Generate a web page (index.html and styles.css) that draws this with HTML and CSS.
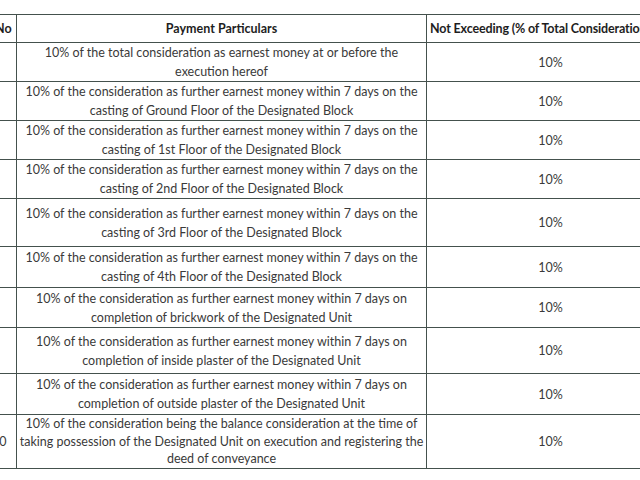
FILE: index.html
```html
<!DOCTYPE html>
<html>
<head>
<meta charset="utf-8">
<link rel="stylesheet" href="styles.css">
</head>
<body>
<table class="sched">
  <colgroup>
    <col class="c-no">
    <col class="c-part">
    <col class="c-pct">
  </colgroup>
  <tr class="head">
    <th class="no">S.No</th>
    <th class="part">Payment Particulars</th>
    <th class="pct">Not Exceeding (% of Total Consideration)</th>
  </tr>
  <tr class="r39">
    <td class="no">1</td>
    <td class="part">10% of the total consideration as earnest money at or before the<br>execution hereof</td>
    <td class="pct">10%</td>
  </tr>
  <tr class="r39">
    <td class="no">2</td>
    <td class="part">10% of the consideration as further earnest money within 7 days on the<br>casting of Ground Floor of the Designated Block</td>
    <td class="pct">10%</td>
  </tr>
  <tr class="r39">
    <td class="no">3</td>
    <td class="part">10% of the consideration as further earnest money within 7 days on the<br>casting of 1st Floor of the Designated Block</td>
    <td class="pct">10%</td>
  </tr>
  <tr class="r39">
    <td class="no">4</td>
    <td class="part">10% of the consideration as further earnest money within 7 days on the<br>casting of 2nd Floor of the Designated Block</td>
    <td class="pct">10%</td>
  </tr>
  <tr class="r48">
    <td class="no">5</td>
    <td class="part">10% of the consideration as further earnest money within 7 days on the<br>casting of 3rd Floor of the Designated Block</td>
    <td class="pct">10%</td>
  </tr>
  <tr class="r41">
    <td class="no">6</td>
    <td class="part">10% of the consideration as further earnest money within 7 days on the<br>casting of 4th Floor of the Designated Block</td>
    <td class="pct">10%</td>
  </tr>
  <tr class="r40">
    <td class="no">7</td>
    <td class="part">10% of the consideration as further earnest money within 7 days on<br>completion of brickwork of the Designated Unit</td>
    <td class="pct">10%</td>
  </tr>
  <tr class="r46">
    <td class="no">8</td>
    <td class="part">10% of the consideration as further earnest money within 7 days on<br>completion of inside plaster of the Designated Unit</td>
    <td class="pct">10%</td>
  </tr>
  <tr class="r41">
    <td class="no">9</td>
    <td class="part">10% of the consideration as further earnest money within 7 days on<br>completion of outside plaster of the Designated Unit</td>
    <td class="pct">10%</td>
  </tr>
  <tr class="r53 tight">
    <td class="no">10</td>
    <td class="part">10% of the consideration being the balance consideration at the time of<br>taking possession of the Designated Unit on execution and registering the<br>deed of conveyance</td>
    <td class="pct">10%</td>
  </tr>
</table>
</body>
</html>
```

FILE: styles.css
```css
html, body {
  margin: 0;
  padding: 0;
  background: #ffffff;
  overflow: hidden;
}

body {
  width: 640px;
  height: 480px;
  font-family: Lato, "Liberation Sans", sans-serif;
  font-size: 12.5px;
  color: #3a3a3a;
}

.sched {
  border-collapse: collapse;
  table-layout: fixed;
  width: 694px;
  margin-top: 14px;
  margin-left: -20px;
}

.c-no { width: 36px; }
.c-part { width: 410px; }
.c-pct { width: 248px; }

.sched th,
.sched td {
  border: 1px solid #44514d;
  padding: 0 2px;
  line-height: 19px;
  vertical-align: middle;
  overflow: hidden;
  white-space: nowrap;
}

.sched th {
  font-weight: bold;
  color: #1e1e1e;
}

.head { height: 28px; }
.r39 { height: 39px; }
.r40 { height: 40px; }
.r41 { height: 41px; }
.r46 { height: 46px; }
.r48 { height: 48px; }
.r53 { height: 53px; }

.sched .tight td { line-height: 17.5px; }

.sched td.no {
  text-align: left;
  padding-left: 11px;
}
.sched th.no {
  text-align: center;
  padding-left: 2px;
}
.part { text-align: center; }
.pct { text-align: center; }
.sched th.pct {
  text-align: left;
  padding-left: 3px;
  letter-spacing: -0.15px;
}
```
